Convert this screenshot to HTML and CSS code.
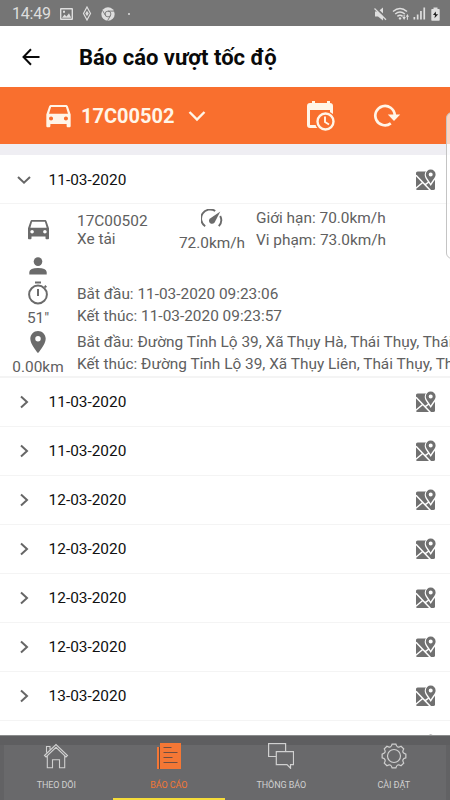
FILE: index.html
```html
<!DOCTYPE html>
<html lang="vi">
<head>
<meta charset="utf-8">
<title>Báo cáo vượt tốc độ</title>
<link rel="stylesheet" href="styles.css">
</head>
<body>
<svg class="defs" width="0" height="0">
  <symbol id="car" viewBox="3 4 18 17"><path d="M18.920 5.010C18.720 4.420 18.160 4 17.500 4h-11c-.66 0-1.210.42-1.420 1.010L3 11v8.500c0 .55.45 1 1 1h1c.55 0 1-.45 1-1V18h12v1.500c0 .55.45 1 1 1h1c.55 0 1-.45 1-1V11l-2.080-5.990zM6.500 15.500c-.83 0-1.500-.67-1.500-1.500s.67-1.500 1.500-1.500S8 13.170 8 14s-.67 1.500-1.500 1.500zm11 0c-.83 0-1.500-.67-1.500-1.500s.67-1.500 1.500-1.500 1.500.67 1.500 1.500-.67 1.500-1.500 1.500zM5 10.500l1.500-5h11l1.500 5H5z"/></symbol>
  <symbol id="map" viewBox="0 0 21 22">
    <rect x="1" y="2.500" width="19" height="18.500" rx="1.600"/>
    <path d="M.5 19.500 8 13.200M1 6.200 15.500 21.500M10.200 15.600 14.500 12.500" fill="none" stroke="#fff" stroke-width="1.500"/>
    <path d="M15.700 17C13 12.500 9.700 9.500 9.700 5.800a6 6 0 0 1 12 0C21.700 9.500 18.400 12.500 15.700 17z" fill="#fff"/>
    <path fill-rule="evenodd" d="M15.700.6a4.900 4.900 0 0 0-4.900 4.900c0 2.900 2.500 4.900 4.900 9 2.400-4.100 4.900-6.100 4.900-9A4.900 4.900 0 0 0 15.700.6zm0 2.900a2 2 0 1 1 0 4 2 2 0 0 1 0-4z"/>
  </symbol>
  <symbol id="right" viewBox="0 0 12 14"><path d="M3 1.500 9 7l-6 5.500" fill="none" stroke="currentColor" stroke-width="2"/></symbol>
  <symbol id="down" viewBox="0 0 14 12"><path d="M1 3l6 5.700L13 3" fill="none" stroke="currentColor" stroke-width="2"/></symbol>
</svg>
<div class="app">
  <div class="status">
    <span class="clock">14:49</span>
    <svg class="s-img" viewBox="0 0 13 12"><path fill-rule="evenodd" d="M1 0h11q1 0 1 1v10q0 1-1 1H1q-1 0-1-1V1q0-1 1-1zm.4 1.400v9.200h10.200V1.400zM2 9.800l2.500-3.300 2 2L9 5.300l2.200 4.500zM3 2.700h2v2H3z"/></svg>
    <svg class="s-dia" viewBox="0 0 10 15"><path d="M5 1 8.500 7.500 5 14 1.500 7.500z" fill="none" stroke="currentColor" stroke-width="1.200"/><path d="M5 4.800 6.700 7.500 5 10.200 3.300 7.500z"/></svg>
    <svg class="s-chr" viewBox="0 0 14 14"><circle cx="7" cy="7" r="6.700"/><g fill="none" stroke="#757575" stroke-width=".9"><circle cx="7" cy="7" r="2.900"/><path d="M7 4.100h6M4.500 8.500 1.500 3.400M9.500 8.500 6.600 13.600"/></g></svg>
    <span class="dot"></span>
    <span class="grow"></span>
    <svg class="s-mute" viewBox="0 0 14 14"><path d="M1 4.500h3L9 .5v13L4 9.500H1z"/><path d="M1 .5 13.500 12" stroke="#757575" stroke-width="2.200"/><path d="M.5 1.500 12 12.700" stroke="currentColor" stroke-width="1.200"/></svg>
    <svg class="s-wifi" viewBox="0 0 18 14"><g fill="none" stroke="currentColor" stroke-width="1.500"><path d="M1 4.500q7-6 14 0M3.200 7q4.800-4 9.600 0M5.400 9.400q2.600-2.200 5.200 0"/></g><circle cx="8" cy="11.400" r="1.200"/><path d="M10.400 10h1.200V7.800h1V10h1.200L12.100 13zM13.800 9.700h1.100v3h1v-3H17L15.400 7z"/></svg>
    <svg class="s-sig" viewBox="0 0 13 13"><path d="M.5 10h1.700v2.500H.5zM3.800 7.500h1.700v5H3.800zM7.100 4h1.700v8.500H7.100zM10.400.5h1.700v12h-1.700z"/></svg>
    <svg class="s-bat" viewBox="0 0 9 14"><path d="M2.500.5h4V2h1.500q.7 0 .7.700V13q0 .7-.7.700H1q-.7 0-.7-.7V2.700Q.3 2 1 2h1.500z"/><path fill="#222" d="M4.700 4.500 2 8h2l-.5 3.200L7.200 7.200H5z"/></svg>
  </div>
  <header class="header">
    <svg class="back" viewBox="0 0 18 18"><path d="M17.500 9H1.800M9 1.300 1.500 9 9 16.700" fill="none" stroke="currentColor" stroke-width="2"/></svg>
    <h1>Báo cáo vượt tốc độ</h1>
  </header>
  <div class="bar">
    <svg class="bar-car"><use href="#car"/></svg>
    <span class="plate">17C00502</span>
    <svg class="bar-down" viewBox="0 0 18 12"><path d="M1.500 2 9 9.500 16.500 2" fill="none" stroke="currentColor" stroke-width="2.400"/></svg>
    <svg class="bar-cal" viewBox="0 0 28 31"><path fill-rule="evenodd" d="M3 3h2V1h3v2h12V1h3v2q3 0 3 3v21q0 1-1 1H3q-3 0-3-3V6q0-3 3-3zm0 7v15h20V10z"/><circle cx="18.500" cy="21.500" r="10.500" fill="#f96f2e"/><circle cx="18.500" cy="21.500" r="8" fill="#f96f2e" stroke="currentColor" stroke-width="2.400"/><path d="M18 16.500v5.500l4 2.500" fill="none" stroke="currentColor" stroke-width="1.900"/></svg>
    <svg class="bar-ref" viewBox="0 0 28 24"><path d="M17.800 20.400A9.700 9.700 0 1 1 21.700 12" fill="none" stroke="currentColor" stroke-width="2.700"/><path d="M14.800 11.500h12.400L21 18z"/></svg>
  </div>
  <main class="list">
    <div class="row open"><svg class="chev-d"><use href="#down"/></svg><span>11-03-2020</span><svg class="map"><use href="#map"/></svg></div>
    <section class="detail">
      <div class="line vehicle">
        <div class="side"><svg class="d-car"><use href="#car"/></svg></div>
        <div class="name"><p>17C00502</p><p>Xe tải</p></div>
        <div class="speed"><svg class="gauge" viewBox="0 0 22 20"><path d="M14.200 2A9 9 0 0 0 4.200 17.200M19.200 7A9 9 0 0 1 17.800 17.200" fill="none" stroke="currentColor" stroke-width="1.900"/><path d="M19.300 2.500 13.600 13.500Q11.700 15.800 9.200 14.200 7 12.200 8.700 9.800z"/></svg><p>72.0km/h</p></div>
        <div class="limits"><p>Giới hạn: 70.0km/h</p><p>Vi phạm: 73.0km/h</p></div>
      </div>
      <div class="line driver"><div class="side"><svg class="person" viewBox="0 0 18 18"><circle cx="9" cy="4.600" r="4.300"/><path d="M.3 17.500V15Q.8 11 9 11t8.700 4v2.500z"/></svg></div></div>
      <div class="line time">
        <div class="side"><svg class="watch" viewBox="0 0 22 24"><path d="M8 .5h6v2H8z"/><circle cx="11" cy="13.500" r="8.900" fill="none" stroke="currentColor" stroke-width="2"/><path d="M10 8h2v7h-2zM17 5.500l1.400-1.400 1.600 1.600-1.400 1.400z"/></svg><p>51"</p></div>
        <div class="texts"><p>Bắt đầu: 11-03-2020 09:23:06</p><p>Kết thúc: 11-03-2020 09:23:57</p></div>
      </div>
      <div class="line place">
        <div class="side"><svg class="pin" viewBox="5 2 14 20"><path d="M12 2C8.130 2 5 5.130 5 9c0 5.250 7 13 7 13s7-7.750 7-13c0-3.870-3.130-7-7-7zm0 9.500a2.500 2.500 0 0 1 0-5 2.500 2.500 0 0 1 0 5z"/></svg><p>0.00km</p></div>
        <div class="texts"><p>Bắt đầu: Đường Tỉnh Lộ 39, Xã Thụy Hà, Thái Thụy, Thái</p><p>Kết thúc: Đường Tỉnh Lộ 39, Xã Thụy Liên, Thái Thụy, Th</p></div>
      </div>
    </section>
    <div class="row"><svg class="chev"><use href="#right"/></svg><span>11-03-2020</span><svg class="map"><use href="#map"/></svg></div>
    <div class="row"><svg class="chev"><use href="#right"/></svg><span>11-03-2020</span><svg class="map"><use href="#map"/></svg></div>
    <div class="row"><svg class="chev"><use href="#right"/></svg><span>12-03-2020</span><svg class="map"><use href="#map"/></svg></div>
    <div class="row"><svg class="chev"><use href="#right"/></svg><span>12-03-2020</span><svg class="map"><use href="#map"/></svg></div>
    <div class="row"><svg class="chev"><use href="#right"/></svg><span>12-03-2020</span><svg class="map"><use href="#map"/></svg></div>
    <div class="row"><svg class="chev"><use href="#right"/></svg><span>12-03-2020</span><svg class="map"><use href="#map"/></svg></div>
    <div class="row"><svg class="chev"><use href="#right"/></svg><span>13-03-2020</span><svg class="map"><use href="#map"/></svg></div>
    <div class="row"><span></span><svg class="map"><use href="#map"/></svg></div>
  </main>
  <nav class="tabs">
    <div class="tab"><svg viewBox="0 0 26 26"><g fill="none" stroke="currentColor" stroke-width="1.100"><path d="M1.500 12.500 13 1.500l11.500 11-1.500 1.400L13 4.300 3 13.900zM3.500 9.500V3.500h3.500v3M4.300 13v11.700h5.200v-8h7v8h5.200V13"/></g></svg><span>THEO DÕI</span></div>
    <div class="tab active"><svg viewBox="0 0 26 26"><path d="M4 0h21v26H4zM1 4h2v22H1z"/><path d="M3.500 4v22M7.500 4.500h8M7.500 9.500h14M7.500 14.500h9M7.500 19.500h14" fill="none" stroke="#5f4a43" stroke-width=".9"/></svg><span>BÁO CÁO</span></div>
    <div class="tab"><svg viewBox="0 0 26 26"><path d="M8 13.500H.6V.6h17V8M8.300 8.600h17.200v13H22.500v3.600L19 21.600H8.300z" fill="none" stroke="currentColor" stroke-width="1.200"/></svg><span>THÔNG BÁO</span></div>
    <div class="tab"><svg viewBox="0 0 26 26"><g fill="none" stroke="currentColor" stroke-width="1.200"><circle cx="13" cy="13" r="6.500"/><path d="M11.100 1.150H14.900Q16 5.800 20.050 3.300L22.700 5.950Q20.200 10 24.850 11.100V14.900Q20.200 16 22.700 20.050L20.050 22.700Q16 20.200 14.900 24.850H11.100Q10 20.200 5.950 22.700L3.300 20.050Q5.800 16 1.150 14.900V11.100Q5.800 10 3.300 5.950L5.950 3.300Q10 5.800 11.100 1.150z"/></g></svg><span>CÀI ĐẶT</span></div>
  </nav>
  <div class="edge"></div>
</div>
</body>
</html>
```

FILE: styles.css
```css
* { box-sizing: border-box; }
body { margin: 0; font-family: Roboto, "Liberation Sans", sans-serif; }
p, h1 { margin: 0; }
svg { display: block; fill: currentColor; flex: none; }
.defs { position: absolute; }
.app { position: relative; display: flex; flex-direction: column; width: 450px; height: 800px; overflow: hidden; background: #fff; }

.status { flex: none; display: flex; align-items: center; height: 26px; padding: 1px 10px 0 12px; background: #757575; color: #dedede; }
.clock { width: 48px; padding-top: 1px; font-size: 16px; line-height: 24px; letter-spacing: -.2px; }
.grow { flex: 1; }
.s-img { width: 13px; height: 12px; }
.s-dia { width: 10px; height: 15px; margin-left: 9px; }
.s-chr { width: 14px; height: 14px; margin-left: 9px; }
.dot { width: 2px; height: 2px; margin-left: 13px; border-radius: 50%; background: currentColor; }
.s-mute { width: 14px; height: 14px; }
.s-wifi { width: 18px; height: 14px; margin-left: 4px; }
.s-sig { width: 13px; height: 13px; margin-left: 3px; }
.s-bat { width: 9px; height: 14px; margin-left: 5px; }

.header { flex: none; display: flex; align-items: center; height: 61px; padding: 1px 0 0 22px; color: #0a0a0a; }
.back { width: 18px; height: 18px; }
.header h1 { margin: 2px 0 0 39px; font-size: 22px; font-weight: 700; line-height: 30px; white-space: nowrap; }

.bar { flex: none; display: flex; align-items: center; height: 57px; padding-left: 46px; background: #f96f2e; color: #fff5e8; }
.bar-car { width: 25px; height: 23px; margin-top: 2px; }
.plate { width: 98px; margin-left: 10px; padding-top: 1px; font-size: 20px; font-weight: 700; letter-spacing: 0; }
.bar-down { width: 18px; height: 12px; margin-left: 9px; }
.bar-cal { width: 28px; height: 31px; margin-left: 101px; }
.bar-ref { width: 28px; height: 24px; margin-left: 38px; margin-top: -1px; }

.list { flex: 1; min-height: 0; overflow: hidden; border-top: 11px solid #efeef3; color: #111; }
.row { display: flex; align-items: center; height: 49px; padding: 0 14px 0 17px; border-bottom: 1px solid #f4f4f4; font-size: 15.4px; }
.row.open { padding-top: 1px; }
.row span { flex: 1; margin-left: 17.600px; }
.row.open span { padding-top: 1px; }
.chev { width: 12px; height: 14px; margin: 0 1px; color: #666; }
.chev-d { width: 14px; height: 12px; color: #666; }
.map { width: 21px; height: 22px; color: #707070; }

.detail { height: 174px; padding-top: 1px; border-bottom: 2px solid #f4f4f4; font-size: 15.4px; color: #606060; white-space: nowrap; overflow: hidden; }
.line { display: flex; }
.side { flex: none; display: flex; flex-direction: column; align-items: center; width: 76px; margin-right: 1px; line-height: 20px; }
.vehicle { height: 50px; }
.driver { height: 26px; }
.time { height: 51px; }
.d-car { width: 21px; height: 20px; margin-top: 15px; }
.name { width: 96px; padding-top: 7px; line-height: 18px; }
.speed { display: flex; flex-direction: column; align-items: center; width: 78px; padding-top: 4px; line-height: 20px; }
.gauge { width: 22px; height: 20px; margin-bottom: 4px; }
.limits { margin-left: 5px; padding-top: 3px; line-height: 21.500px; }
.side svg, .gauge { color: #6b6b6b; }
.person { width: 18px; height: 18px; margin-top: 2px; }
.watch { width: 22px; height: 24px; }
.time .side p { margin-top: 3px; }
.texts { line-height: 21.500px; }
.time .texts { padding-top: 3px; }
.pin { width: 16px; height: 22px; margin-top: -1px; }
.place .side p { margin-top: 4px; }

.tabs { flex: none; display: flex; height: 65px; background: #69696b; border-top: 1px solid #8a8c8c; box-shadow: inset 0 9px 0 #5e5e60, inset 4px 0 0 #626264, inset -4px 0 0 #626264; color: #d0d0d0; }
.tab { flex: 1; display: flex; flex-direction: column; align-items: center; padding-top: 7px; border-bottom: 2px solid transparent; font-size: 9px; letter-spacing: -.1px; }
.tab svg { width: 26px; height: 26px; }
.tab span { margin-top: 10px; line-height: 12px; }
.tab.active { color: #f47735; border-bottom-color: #f6dc39; }

.edge { position: absolute; left: 446px; top: 112px; width: 12px; height: 147px; border: 1px solid #c4c4c4; border-radius: 6px; background: rgba(255, 255, 255, .7); }
```
